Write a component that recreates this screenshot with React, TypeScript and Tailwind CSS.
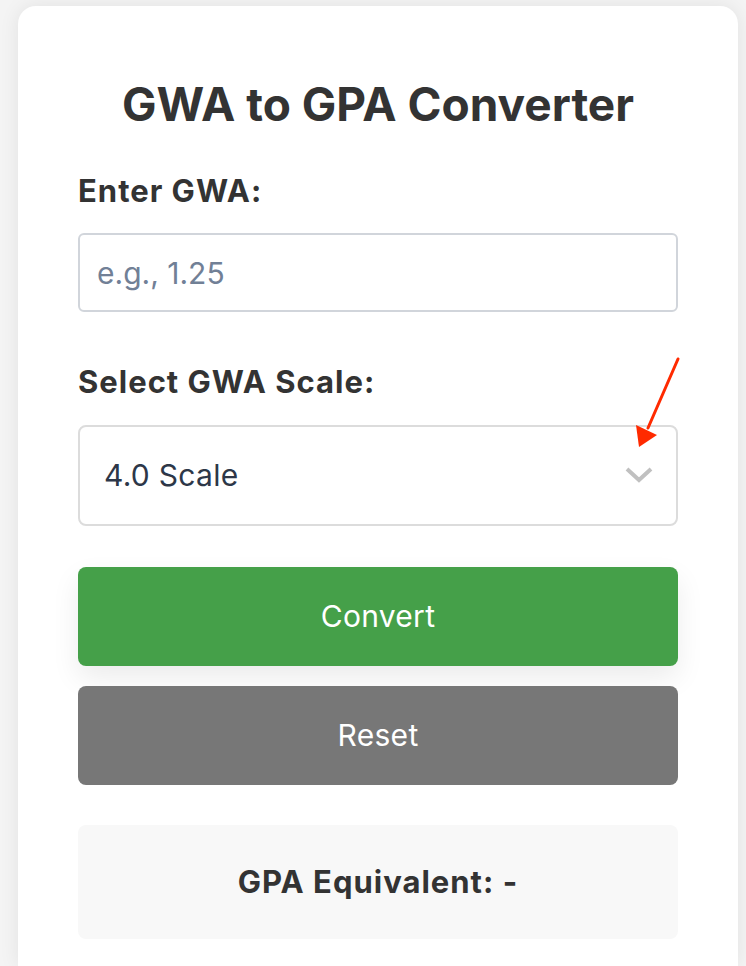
export default function App() {
  return (
    <div className="min-h-[966px] bg-[#f4f4f4] pl-[18px] pr-[8px] pt-[6px] font-['Inter',sans-serif] relative overflow-hidden">
      <div className="bg-white rounded-t-[18px] min-h-[960px] px-[60px] pt-[70px] shadow-[0_0_20px_rgba(0,0,0,0.08)]">
        <h1 className="text-center text-[46px] leading-[56px] font-bold text-[#333]">GWA to GPA Converter</h1>

        <label className="block mt-[41px] text-[31px] leading-[36px] font-bold tracking-[1px] text-[#333]">Enter GWA:</label>
        <input
          type="text"
          placeholder="e.g., 1.25"
          className="mt-[24px] block w-full h-[79px] rounded-[6px] border-2 border-[#d1d5db] px-[17px] text-[30px] text-[#2d3748] placeholder:text-[#718096] outline-none"
        />

        <label className="block mt-[52px] text-[31px] leading-[36px] font-bold tracking-[1px] text-[#333]">Select GWA Scale:</label>
        <div className="mt-[25px] relative h-[101px] rounded-[8px] border-2 border-[#dcdcdc] flex items-center px-[24px]">
          <span className="text-[30px] tracking-[0.3px] text-[#2d3748]">4.0 Scale</span>
          <svg className="absolute right-[23px] top-[40px]" width="28" height="18" viewBox="0 0 28 18" fill="none">
            <path d="M2 2 L14 13 L26 2" stroke="#c0c0c0" strokeWidth="4" />
          </svg>
        </div>

        <button className="mt-[41px] block w-full h-[99px] rounded-[8px] bg-[#45a049] text-white text-[30px] tracking-[0.3px] shadow-[0_12px_28px_rgba(0,0,0,0.08)]">
          Convert
        </button>
        <button className="mt-[20px] block w-full h-[99px] rounded-[8px] bg-[#777777] text-white text-[30px] tracking-[0.3px]">
          Reset
        </button>

        <div className="mt-[40px] h-[114px] rounded-[8px] bg-[#f8f8f8] flex items-center justify-center">
          <span className="text-[31px] font-bold tracking-[1px] text-[#333]">GPA Equivalent: -</span>
        </div>
      </div>

      <svg className="absolute left-[630px] top-[352px]" width="60" height="100" viewBox="0 0 60 100" fill="none">
        <line x1="48" y1="7" x2="18" y2="76" stroke="#ff2a00" strokeWidth="3" strokeLinecap="round" />
        <polygon points="9,95 6,73 27,83" fill="#ff2a00" />
      </svg>
    </div>
  );
}
